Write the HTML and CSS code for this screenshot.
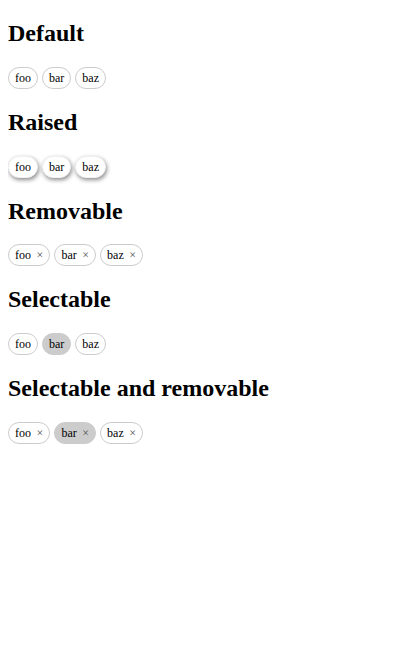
FILE: index.html
```html
<!DOCTYPE html>
<html>
<head>
<meta charset="utf-8">
<link rel="stylesheet" href="styles.css">
</head>
<body>
<h2>Default</h2>
<div class="chips">
  <span class="chip">foo</span>
  <span class="chip">bar</span>
  <span class="chip">baz</span>
</div>
<h2>Raised</h2>
<div class="chips">
  <span class="chip raised">foo</span>
  <span class="chip raised">bar</span>
  <span class="chip raised">baz</span>
</div>
<h2>Removable</h2>
<div class="chips">
  <span class="chip">foo<span class="x">×</span></span>
  <span class="chip">bar<span class="x">×</span></span>
  <span class="chip">baz<span class="x">×</span></span>
</div>
<h2>Selectable</h2>
<div class="chips">
  <span class="chip">foo</span>
  <span class="chip selected">bar</span>
  <span class="chip">baz</span>
</div>
<h2>Selectable and removable</h2>
<div class="chips">
  <span class="chip">foo<span class="x">×</span></span>
  <span class="chip selected">bar<span class="x">×</span></span>
  <span class="chip">baz<span class="x">×</span></span>
</div>
</body>
</html>
```
FILE: styles.css
```css
body {
  margin: 0 8px 8px;
  font-family: "Liberation Serif", serif;
  background: #fff;
  color: #000;
}
h2 {
  font-size: 24px;
  font-weight: bold;
  margin: 19.92px 0;
}
.chips {
  display: flex;
  gap: 4px;
  font-size: 12px;
}
.chip {
  display: inline-block;
  border: 1px solid #ccc;
  border-radius: 11px;
  padding: 3px 6px;
  line-height: 14px;
  background: #fff;
}
.raised {
  border-color: #f0f0f0;
  box-shadow: 1px 2px 4px rgba(0, 0, 0, 0.45);
}
.selected {
  background: #ccc;
  border-color: #ccc;
}
.x {
  margin-left: 5.6px;
  font-size: 12px;
  color: #555;
}
```
